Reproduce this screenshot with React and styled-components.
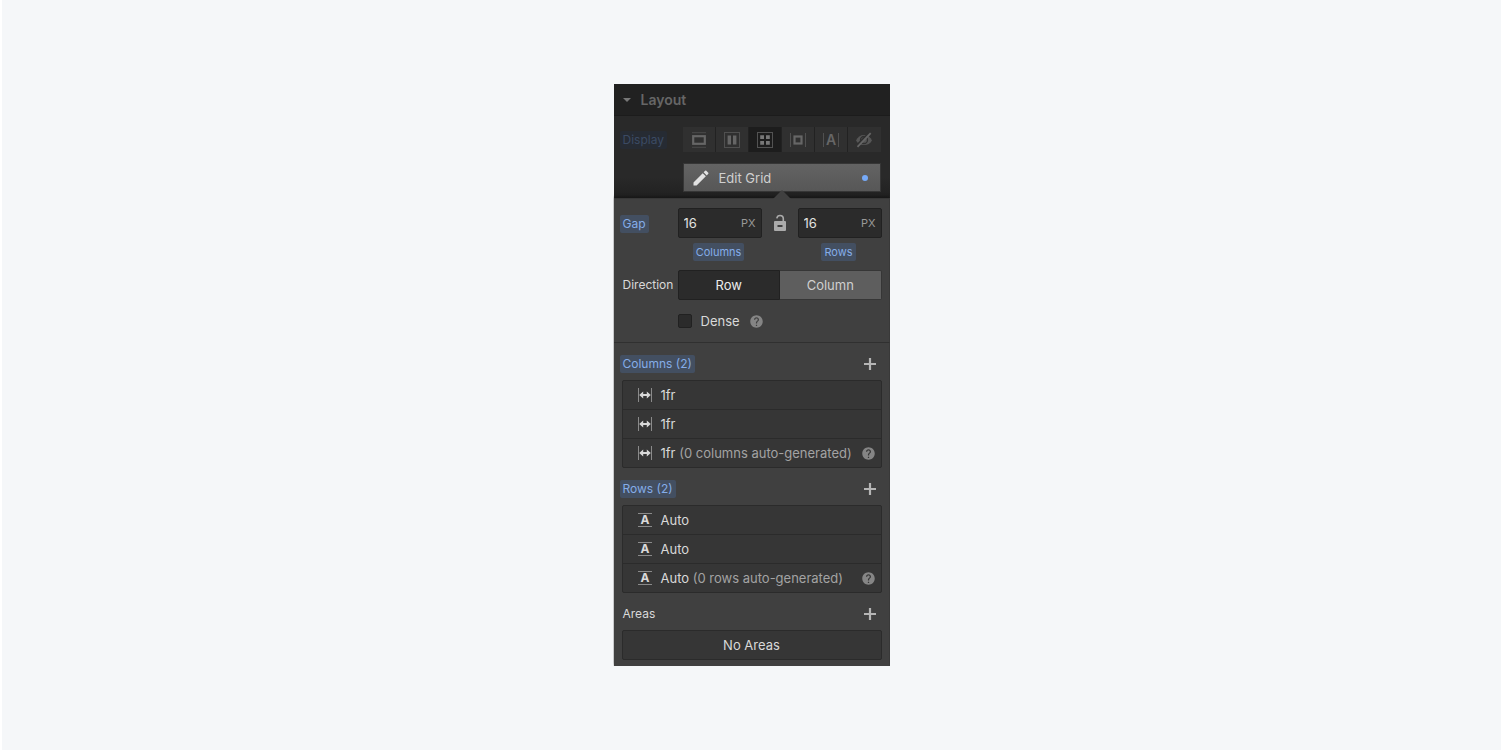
import React, { useState } from "react";
import styled, { createGlobalStyle } from "styled-components";
import { MdEdit, MdHelp } from "react-icons/md";

const GlobalStyle = createGlobalStyle`
  * {
    box-sizing: border-box;
  }

  body {
    margin: 0;
    background: #f5f7f9;
    font-family: Inter, "Liberation Sans", sans-serif;
    font-size: 13px;
    line-height: 18px;
  }

  button,
  input {
    font: inherit;
    color: inherit;
    padding: 0;
    margin: 0;
  }

  svg {
    display: block;
    flex-shrink: 0;
  }
`;

function BlockIcon() {
  return (
    <svg width="16" height="16" viewBox="0 0 16 16" fill="none" stroke="currentColor">
      <path d="M1 .7h14M1 15.3h14" opacity=".5" />
      <rect x="2.2" y="4.2" width="11.6" height="7.6" strokeWidth="2.2" />
    </svg>
  );
}

function FlexIcon() {
  return (
    <svg width="16" height="16" viewBox="0 0 16 16" fill="currentColor">
      <rect x=".5" y=".5" width="15" height="15" fill="none" stroke="currentColor" opacity=".6" />
      <path d="M3.6 3.5h3.4v9H3.6zM9 3.5h3.4v9H9z" />
    </svg>
  );
}

function GridIcon() {
  return (
    <svg width="16" height="16" viewBox="0 0 16 16" fill="currentColor">
      <rect x=".5" y=".5" width="15" height="15" fill="none" stroke="currentColor" opacity=".6" />
      <path d="M3.2 3.2H7V7H3.2zM9 3.200h3.800V7H9zM3.200 9H7v3.800H3.200zM9 9h3.800v3.800H9z" />
    </svg>
  );
}

function InlineBlockIcon() {
  return (
    <svg width="16" height="16" viewBox="0 0 16 16" fill="none" stroke="currentColor">
      <path d="M.5 1v14M15.5 1v14" opacity=".6" />
      <rect x="4.5" y="4.5" width="7" height="7" strokeWidth="2.2" />
    </svg>
  );
}

function InlineIcon() {
  return (
    <svg width="16" height="16" viewBox="0 0 16 16" fill="currentColor">
      <path d="M.5 1v14M15.5 1v14" stroke="currentColor" opacity=".6" />
      <text x="8" y="13" textAnchor="middle" fontSize="14" fontWeight="600">
        A
      </text>
    </svg>
  );
}

function HiddenIcon() {
  return (
    <svg width="18" height="16" viewBox="0 0 18 16" fill="none" stroke="currentColor">
      <path d="M1 8.5C2.5 5 5.5 3 9 3s6.500 2 8 5.500C15.500 11.500 12.500 13 9 13S2.500 11.500 1 8.500z" fill="currentColor" stroke="none" opacity=".7" />
      <circle cx="9" cy="8" r="3.500" stroke="#303030" strokeWidth="1.300" />
      <path d="M1.500 13.500L14.500 .5" stroke="#303030" strokeWidth="1.800" />
      <path d="M2.500 14.800L15.700 1.200" strokeWidth="1.800" />
    </svg>
  );
}

function UnlockIcon() {
  return (
    <svg width="14" height="18" viewBox="0 0 14 18">
      <path d="M3.800 4.300C4.200 2.300 5.400 1.500 7 1.500c2 0 3.300 1.300 3.300 3.300V8" fill="none" stroke="currentColor" strokeWidth="1.600" />
      <path d="M2 7h10a1 1 0 0 1 1 1v8a1 1 0 0 1-1 1H2a1 1 0 0 1-1-1V8a1 1 0 0 1 1-1zm2.500 4v2h5v-2z" fill="currentColor" fillRule="evenodd" />
    </svg>
  );
}

function PlusIcon() {
  return (
    <svg width="12" height="12" viewBox="0 0 12 12" stroke="currentColor" strokeWidth="2.2">
      <path d="M6 0v12M0 6h12" />
    </svg>
  );
}

function WidthIcon() {
  return (
    <svg width="14" height="14" viewBox="0 0 14 14">
      <path d="M.5 0v14M13.5 0v14" stroke="#8a8a8a" />
      <path d="M3.500 7h7" stroke="currentColor" strokeWidth="1.800" />
      <path d="M1.200 7L5.200 3.500v7zM12.800 7L8.800 3.500v7z" fill="currentColor" />
    </svg>
  );
}

function AutoIcon() {
  return (
    <svg width="14" height="14" viewBox="0 0 14 14">
      <path d="M0 .5h14M0 13.5h14" stroke="#8a8a8a" />
      <text x="7" y="11" textAnchor="middle" fontSize="12" fontWeight="700" fill="currentColor">
        A
      </text>
    </svg>
  );
}

const displayModes = [
  { name: "Block", Icon: BlockIcon },
  { name: "Flex", Icon: FlexIcon },
  { name: "Grid", Icon: GridIcon },
  { name: "Inline block", Icon: InlineBlockIcon },
  { name: "Inline", Icon: InlineIcon },
  { name: "None", Icon: HiddenIcon },
];

function TrackList({ title, value, note, Icon }) {
  return (
    <section>
      <SectionHead>
        <Tag>{title} (2)</Tag>
        <AddButton type="button" aria-label={`Add ${title}`}>
          <PlusIcon />
        </AddButton>
      </SectionHead>
      <Tracks>
        <Track>
          <Icon />
          <span>{value}</span>
        </Track>
        <Track>
          <Icon />
          <span>{value}</span>
        </Track>
        <Track>
          <Icon />
          <span>
            {value} <Note>{note}</Note>
          </span>
          <HelpButton type="button" aria-label="Help">
            <MdHelp size={15} />
          </HelpButton>
        </Track>
      </Tracks>
    </section>
  );
}

function App() {
  const [mode, setMode] = useState("Grid");
  const [direction, setDirection] = useState("Row");

  return (
    <Page>
      <GlobalStyle />
      <Panel>
        <Header type="button">
          <Caret />
          Layout
        </Header>

        <DisplayArea>
          <div>
            <Tag $dim>Display</Tag>
          </div>
          <DisplayModes>
            {displayModes.map(({ name, Icon }) => (
              <ModeButton
                key={name}
                type="button"
                aria-label={name}
                $active={mode === name}
                onClick={() => setMode(name)}
              >
                <Icon />
              </ModeButton>
            ))}
          </DisplayModes>
          <EditButton type="button">
            <MdEdit size={20} />
            Edit Grid
            <Dot />
          </EditButton>
        </DisplayArea>

        <Editor>
          <Field>
            <div>
              <Tag>Gap</Tag>
            </div>
            <GapInputs>
              <InputBox>
                <input id="gap-columns" defaultValue="16" />
                <small>PX</small>
              </InputBox>
              <LockButton type="button" aria-label="Link gaps">
                <UnlockIcon />
              </LockButton>
              <InputBox>
                <input id="gap-rows" defaultValue="16" />
                <small>PX</small>
              </InputBox>
            </GapInputs>
            <GapLabels>
              <Tag as="label" htmlFor="gap-columns" $small>
                Columns
              </Tag>
              <Tag as="label" htmlFor="gap-rows" $small>
                Rows
              </Tag>
            </GapLabels>
          </Field>

          <DirectionField>
            <Label>Direction</Label>
            <Segments>
              {["Row", "Column"].map((name) => (
                <Segment
                  key={name}
                  type="button"
                  $active={direction === name}
                  onClick={() => setDirection(name)}
                >
                  {name}
                </Segment>
              ))}
            </Segments>
          </DirectionField>

          <DenseRow>
            <Checkbox type="checkbox" id="dense" />
            <label htmlFor="dense">Dense</label>
            <HelpButton type="button" aria-label="Help">
              <MdHelp size={15} />
            </HelpButton>
          </DenseRow>

          <Divider />

          <TrackList
            title="Columns"
            value="1fr"
            note="(0 columns auto-generated)"
            Icon={WidthIcon}
          />
          <TrackList
            title="Rows"
            value="Auto"
            note="(0 rows auto-generated)"
            Icon={AutoIcon}
          />

          <section>
            <SectionHead>
              <Label>Areas</Label>
              <AddButton type="button" aria-label="Add area">
                <PlusIcon />
              </AddButton>
            </SectionHead>
            <Empty>No Areas</Empty>
          </section>
        </Editor>
      </Panel>
    </Page>
  );
}

export default App;

const Page = styled.main`
  min-height: 100vh;
  display: flex;
  align-items: center;
  justify-content: center;
  border-left: 2px solid #fff;
  border-bottom: 1px solid #fff;
`;

const Panel = styled.div`
  width: 276px;
  background: #404040;
  color: #d9d9d9;
`;

const Header = styled.button`
  width: 100%;
  height: 32px;
  display: flex;
  align-items: center;
  gap: 10px;
  padding: 0 9px;
  border: none;
  border-bottom: 1px solid #1c1c1c;
  background: #212121;
  color: #666;
  font-size: 14px;
  font-weight: 600;
`;

const Caret = styled.span`
  border: 4px solid transparent;
  border-top: 4px solid #777;
  border-bottom: none;
`;

const DisplayArea = styled.div`
  display: grid;
  grid-template-columns: 61px 1fr;
  align-items: center;
  row-gap: 11px;
  padding: 11px 9px 6px 8px;
  background: linear-gradient(#292929 75%, #202020);
`;

const Tag = styled.span`
  display: inline-block;
  height: 18px;
  padding: 0 3px;
  margin-left: ${(props) => (props.$small ? "0" : "-2px")};
  border-radius: 2px;
  background: ${(props) => (props.$dim ? "#262b33" : "#434f61")};
  color: ${(props) => (props.$dim ? "#3b4a63" : "#85ade8")};
  font-size: ${(props) => (props.$small ? "11px" : "12px")};
`;

const DisplayModes = styled.div`
  display: flex;
  gap: 1px;
  height: 25px;
  background: #222;
`;

const ModeButton = styled.button`
  flex: 1;
  display: flex;
  align-items: center;
  justify-content: center;
  border: none;
  background: ${(props) => (props.$active ? "#1d1d1d" : "#303030")};
  color: ${(props) => (props.$active ? "#787878" : "#666")};
`;

const EditButton = styled.button`
  grid-column: 2;
  height: 29px;
  display: flex;
  align-items: center;
  gap: 8px;
  padding: 0 12px 0 7px;
  border: 1px solid #363636;
  background: linear-gradient(#636363, #575757);
  color: #d0d0d0;

  svg {
    color: #e2e2e2;
  }
`;

const Dot = styled.span`
  width: 6px;
  height: 6px;
  margin-left: auto;
  border-radius: 50%;
  background: #76aaf8;
`;

const Editor = styled.div`
  position: relative;
  padding: 9px 8px 6px;
  border-top: 1px solid #383838;
  box-shadow: 0 -1px 3px #141414;
  clip-path: inset(-9px 0 0 0);
  background: #404040;

  &::before {
    content: "";
    position: absolute;
    top: -9px;
    left: 159px;
    border: 9px solid transparent;
    border-bottom-color: #404040;
    border-top: none;
  }
`;

const Field = styled.div`
  display: grid;
  grid-template-columns: 56px 1fr;
  align-items: center;
  row-gap: 5px;
`;

const DirectionField = styled(Field)`
  margin-top: 9px;
`;

const GapInputs = styled.div`
  display: grid;
  grid-template-columns: 1fr 36px 1fr;
  align-items: center;
`;

const InputBox = styled.div`
  display: flex;
  align-items: center;
  min-width: 0;
  height: 30px;
  padding: 0 5px;
  border: 1px solid #212121;
  border-radius: 2px;
  background: #2b2b2b;

  input {
    flex: 1;
    width: 100%;
    min-width: 0;
    border: none;
    outline: none;
    background: transparent;
    color: #e2e2e2;
  }

  small {
    color: #999;
    font-size: 11px;
  }
`;

const LockButton = styled.button`
  display: flex;
  justify-content: center;
  border: none;
  background: none;
  color: #ababab;
`;

const GapLabels = styled.div`
  grid-column: 2;
  display: grid;
  grid-template-columns: 82px 82px;
  column-gap: 38px;
  justify-items: center;
`;

const Label = styled.span`
  padding-left: 1px;
  font-size: 12px;
`;

const Segments = styled.div`
  display: flex;
  height: 30px;
`;

const Segment = styled.button`
  flex: 1;
  border: 1px solid ${(props) => (props.$active ? "#212121" : "#363636")};
  border-left-color: #212121;
  border-radius: ${(props) => (props.$active ? "2px 0 0 2px" : "0 2px 2px 0")};
  background: ${(props) => (props.$active ? "#2b2b2b" : "#5e5e5e")};
  color: ${(props) => (props.$active ? "#ebebeb" : "#d0d0d0")};

  & + & {
    border-left: none;
  }
`;

const DenseRow = styled.div`
  display: flex;
  align-items: center;
  height: 18px;
  margin: 12px 0 12px 56px;

  label {
    margin: 0 9px;
  }
`;

const Checkbox = styled.input`
  appearance: none;
  width: 14px;
  height: 14px;
  border: 1px solid #212121;
  border-radius: 2px;
  background: #2b2b2b;
`;

const HelpButton = styled.button`
  display: flex;
  border: none;
  background: none;
  color: #858585;
`;

const Divider = styled.hr`
  height: 1px;
  margin: 0 -8px;
  border: none;
  background: #303030;
`;

const SectionHead = styled.div`
  display: flex;
  align-items: center;
  justify-content: space-between;
  height: 18px;
  margin: 12px 0 7px;
`;

const AddButton = styled.button`
  display: flex;
  margin-right: 6px;
  border: none;
  background: none;
  color: #b5b5b5;
`;

const Tracks = styled.ul`
  margin: 0;
  padding: 0;
  list-style: none;
  border: 1px solid #2b2b2b;
  border-radius: 2px;
  background: #363636;
`;

const Track = styled.li`
  display: flex;
  align-items: center;
  gap: 9px;
  height: 29px;
  padding: 0 5px 0 15px;
  white-space: nowrap;

  & + & {
    border-top: 1px solid #2b2b2b;
  }

  &:first-child {
    height: 28px;
  }

  ${HelpButton} {
    margin-left: auto;
  }
`;

const Note = styled.span`
  color: #a3a3a3;
`;

const Empty = styled.div`
  height: 30px;
  padding: 5px;
  border: 1px solid #2b2b2b;
  border-radius: 2px;
  background: #363636;
  text-align: center;
`;
